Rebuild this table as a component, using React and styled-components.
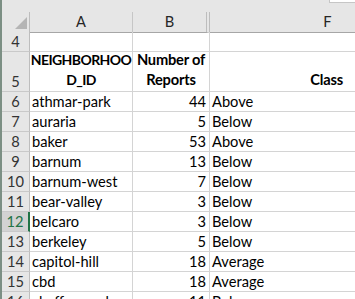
import styled, { createGlobalStyle } from "styled-components";

const GlobalStyle = createGlobalStyle`
  html, body {
    margin: 0;
    padding: 0;
    background: #ffffff;
    overflow: hidden;
  }
  body {
    font-family: Lato, "Open Sans", sans-serif;
    font-size: 14.67px;
    color: #000000;
  }
`;

const Window = styled.div`
  width: 355px;
  height: 299px;
  display: flex;
  overflow: hidden;
`;

const EdgeStrip = styled.div`
  width: 2px;
  flex: none;
  background: #7c8f84;
`;

const Workbook = styled.div`
  flex: 1;
  min-width: 0;
  display: flex;
  flex-direction: column;
`;

const TopGap = styled.div`
  height: 12px;
  flex: none;
  background: #e6e6e6;
  display: flex;
  justify-content: flex-end;
  align-items: flex-start;
`;

const FormulaEdge = styled.div`
  width: 25px;
  height: 2px;
  background: #ffffff;
  border-left: 1px solid #c6c6c6;
  border-bottom: 1px solid #c6c6c6;
`;

const Sheet = styled.div`
  display: grid;
  grid-template-columns: 28px 103px 77px 236px;
  grid-auto-rows: 20px;
`;

const Cell = styled.div`
  box-sizing: border-box;
  border-right: 1px solid #d4d4d4;
  border-bottom: 1px solid #d4d4d4;
  padding: 0 3px 0 2px;
  display: flex;
  align-items: flex-end;
  justify-content: ${(p) => (p.$align === "right" ? "flex-end" : p.$align === "center" ? "center" : "flex-start")};
  text-align: ${(p) => p.$align || "left"};
  line-height: 19px;
  white-space: nowrap;
  overflow: hidden;
  grid-row: span ${(p) => p.$span || 1};
`;

const HeadCell = styled(Cell)`
  background: #e6e6e6;
  border-right: ${(p) => (p.$hidden ? "4px double #bdbdbd" : "1px solid #c6c6c6")};
  border-bottom: 1px solid #a6a6a6;
  justify-content: center;
  align-items: center;
  height: 21px;
  color: #262626;
  padding: 0;
  line-height: 20px;
`;

const Corner = styled(HeadCell)`
  justify-content: flex-end;
  align-items: flex-end;
  padding: 0 2px 3px 0;
  border-right: 1px solid #bdbdbd;
`;

const RowHead = styled(Cell)`
  background: ${(p) => (p.$selected ? "#d2d2d2" : "#e6e6e6")};
  color: ${(p) => (p.$selected ? "#217346" : "#333333")};
  border-right: ${(p) => (p.$selected ? "2px solid #217346" : "1px solid #bdbdbd")};
  border-bottom: 1px solid #c9c9c9;
  justify-content: center;
  padding: 0;
`;

const Title = styled(Cell)`
  padding: 0 2px 1px;
  overflow: visible;
`;

const TitleText = styled.div`
  font-weight: 700;
  font-size: ${(p) => (p.$tight ? "14px" : "14.67px")};
  line-height: 20px;
  letter-spacing: ${(p) => (p.$tight ? "-0.6px" : "-0.2px")};
  text-align: ${(p) => p.$align || "center"};
  white-space: nowrap;
`;

const ClassTitle = styled(Title)`
  justify-content: flex-end;
  padding-right: 102px;
`;

const rows = [
  [6, "athmar-park", 44, "Above"],
  [7, "auraria", 5, "Below"],
  [8, "baker", 53, "Above"],
  [9, "barnum", 13, "Below"],
  [10, "barnum-west", 7, "Below"],
  [11, "bear-valley", 3, "Below"],
  [12, "belcaro", 3, "Below"],
  [13, "berkeley", 5, "Below"],
  [14, "capitol-hill", 18, "Average"],
  [15, "cbd", 18, "Average"],
  [16, "chaffee-park", 11, "Below"],
];

const CornerMark = () => (
  <svg width="12" height="12" viewBox="0 0 12 12">
    <polygon points="12,0 12,12 0,12" fill="#b5b5b5" />
  </svg>
);

const DataRow = ({ n, name, count, cls }) => (
  <>
    <RowHead $selected={n === 12}>{n}</RowHead>
    <Cell>{name}</Cell>
    <Cell $align="right">{count}</Cell>
    <Cell>{cls}</Cell>
  </>
);

const App = () => {
  return (
    <Window>
      <GlobalStyle />
      <EdgeStrip />
      <Workbook>
        <TopGap>
          <FormulaEdge />
        </TopGap>
        <Sheet>
          <Corner>
            <CornerMark />
          </Corner>
          <HeadCell>A</HeadCell>
          <HeadCell $hidden>B</HeadCell>
          <HeadCell>F</HeadCell>

          <RowHead>4</RowHead>
          <Cell />
          <Cell />
          <Cell />

          <RowHead $span={2}>5</RowHead>
          <Title $span={2} $align="center">
            <TitleText $tight>
              NEIGHBORHOO
              <br />
              D_ID
            </TitleText>
          </Title>
          <Title $span={2} $align="center">
            <TitleText>
              Number of
              <br />
              Reports
            </TitleText>
          </Title>
          <ClassTitle $span={2}>
            <TitleText $align="right">Class</TitleText>
          </ClassTitle>

          {rows.map(([n, name, count, cls]) => (
            <DataRow key={n} n={n} name={name} count={count} cls={cls} />
          ))}
        </Sheet>
      </Workbook>
    </Window>
  );
};

export default App;
